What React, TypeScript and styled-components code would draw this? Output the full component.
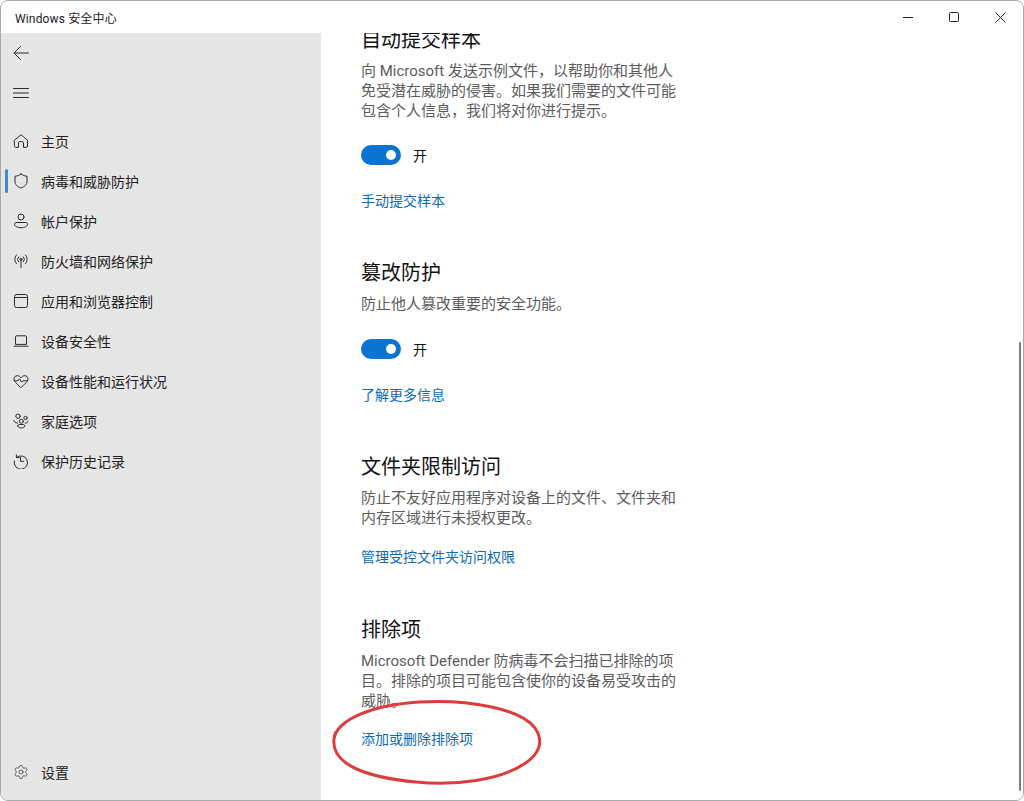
import React from "react";
import styled, { createGlobalStyle } from "styled-components";
import { Settings } from "lucide-react";

const Global = createGlobalStyle`
  html, body { margin: 0; padding: 0; background: #fff; }
  body { font-family: "Roboto", "Noto Sans CJK SC", sans-serif; }
  #root { width: 1024px; height: 801px; overflow: hidden; }
`;
const Win = styled.div`
  position: relative; box-sizing: border-box; width: 1024px; height: 801px;
  display: flex; flex-direction: column; overflow: hidden;
  background: #fff; border: 1px solid #a9a9a9;
  border-radius: 8px; color: #1a1a1a;
`;
const TitleBar = styled.header`
  flex: 0 0 32px; display: flex; align-items: center; justify-content: space-between;
  padding-left: 14px; background: #fff; font-size: 12px; color: #222;
`;
const TitleText = styled.span` font-weight: 400; letter-spacing: 0.15px; `;
const Controls = styled.div` display: flex; height: 32px; `;
const Ctl = styled.div`
  width: 46px; height: 32px; display: flex; align-items: center; justify-content: center;
  svg { display: block; }
`;
const Body = styled.div` flex: 1; display: flex; min-height: 0; `;
const Side = styled.aside`
  flex: 0 0 320px; display: flex; flex-direction: column;
  background: #e6e6e6; font-size: 14px; color: #222; padding-bottom: 8px; box-sizing: border-box;
`;
const ToolBtn = styled.div` height: 40px; display: flex; align-items: center; padding-left: 12px; `;
const Nav = styled.nav` margin-top: 8px; display: flex; flex-direction: column; `;
const Foot = styled.div` margin-top: auto; `;
const Row = styled.div<{ $active?: boolean }>`
  position: relative; height: 40px; display: flex; align-items: center; gap: 12px; padding-left: 12px;
  ${(p) => p.$active ? `&::before { content: ""; position: absolute; left: 4px; top: 8px; width: 3px; height: 24px; border-radius: 2px; background: #3f8cd0; }` : ""}
  svg { display: block; flex: none; }
`;
const Main = styled.main`
  flex: 1; min-width: 0; overflow: hidden; padding-left: 40px; background: #fff;
`;
const Section = styled.section<{ $top: number }>`
  width: 320px; margin-top: ${(p) => p.$top}px;
`;
const Heading = styled.h2`
  margin: 0; font-size: 20px; line-height: 28px; font-weight: 400; color: #111;
`;
const Desc = styled.p`
  margin: 7px 0 0; font-size: 15px; line-height: 20px; color: #5c5c5c; font-weight: 400;
`;
const ToggleRow = styled.div<{ $gap: number }>`
  margin-top: ${(p) => p.$gap}px; display: flex; align-items: center; gap: 12px; height: 20px; font-size: 14px; color: #111;
`;
const Track = styled.span`
  position: relative; display: block; width: 40px; height: 20px; border-radius: 10px; background: #0a74d0;
`;
const Knob = styled.span`
  position: absolute; right: 5px; top: 5px; width: 10px; height: 10px; border-radius: 50%; background: #fff;
`;
const Link = styled.a<{ $gap: number }>`
  display: block; margin-top: ${(p) => p.$gap}px; font-size: 14px; line-height: 20px; color: #0a6bb8; cursor: pointer;
`;
const ScrollThumb = styled.div`
  position: absolute; right: 2px; top: 341px; width: 2px; height: 449px; border-radius: 1px; background: #7a7a7a;
`;
const Scribble = styled.svg`
  position: absolute; left: 326px; top: 694px; pointer-events: none;
`;

const Ico: React.FC<{ children: React.ReactNode }> = ({ children }) => (
  <svg width={16} height={16} viewBox="0 0 16 16" fill="none" stroke="#2b2b2b" strokeWidth="1" strokeLinecap="round" strokeLinejoin="round">{children}</svg>
);

const items: { label: string; active?: boolean; icon: React.ReactNode }[] = [
  { label: "主页", icon: <Ico><path d="M1.5 7.2 8 1.7l6.5 5.5v5.8c0 .8-.7 1.4-1.4 1.4H10.5V9.8c0-.7-.5-1.2-1.2-1.2H6.7c-.7 0-1.2.5-1.2 1.2v4.6H2.9c-.8 0-1.4-.6-1.4-1.4z" /></Ico> },
  { label: "病毒和威胁防护", active: true, icon: <Ico><path d="M8 1c1.8 1.4 3.8 2.1 6 2.2v5c0 3.3-2.2 5.5-6 6.8-3.8-1.3-6-3.5-6-6.8v-5C4.2 3.1 6.2 2.4 8 1z" /></Ico> },
  { label: "帐户保护", icon: <Ico><circle cx="8" cy="4" r="3" /><path d="M3.2 9.5h9.6c.9 0 1.7.7 1.7 1.6 0 2.2-2.9 3.6-6.5 3.6s-6.5-1.4-6.5-3.6c0-.9.8-1.6 1.7-1.6z" /></Ico> },
  { label: "防火墙和网络保护", icon: <Ico><circle cx="8" cy="6.3" r="1.1" /><path d="M8 7.5V14.5M5.6 3.8a3.6 3.6 0 0 0 0 5M10.4 3.8a3.6 3.6 0 0 1 0 5M3.4 2a6.3 6.3 0 0 0 0 8.6M12.6 2a6.3 6.3 0 0 1 0 8.6" /></Ico> },
  { label: "应用和浏览器控制", icon: <Ico><rect x="1.5" y="1.5" width="13" height="13" rx="2" /><path d="M1.5 4.5h13" /></Ico> },
  { label: "设备安全性", icon: <Ico><path d="M2.5 11V4c0-.7.6-1.2 1.2-1.2h8.6c.7 0 1.2.5 1.2 1.2v7zM1 13.2h14" /></Ico> },
  { label: "设备性能和运行状况", icon: <Ico><path d="M2.5 9.3C1.5 8.2 1 7.2 1 6c0-2 1.5-3.3 3.3-3.3 1.5 0 2.8.8 3.7 2.1.9-1.3 2.2-2.1 3.7-2.1C13.5 2.7 15 4 15 6c0 1.2-.5 2.2-1.5 3.3L8 14.5z" /><path d="M1.5 7.8H5l1.5-2 2 3.4 1.3-1.4h4.7" /></Ico> },
  { label: "家庭选项", icon: <Ico><circle cx="5" cy="3.2" r="2.2" /><circle cx="12.5" cy="5" r="1.7" /><circle cx="8.3" cy="8.3" r="2" /><path d="M1 7.5c0 1.5 1.2 2.5 3.5 2.5M15 8.2c0 1-1 2-2.8 2M4.8 13c0-1 .6-1.5 1.5-1.5h4c.9 0 1.5.5 1.5 1.5 0 1-1.5 2-3.5 2s-3.5-1-3.5-2z" /></Ico> },
  { label: "保护历史记录", icon: <Ico><path d="M3.4 1.8v2.8h2.8" /><path d="M3.4 4.5A6.7 6.7 0 1 1 1.3 8" /><path d="M7.5 4.3V8.3h3.2" /></Ico> },
];

export default function App() {
  return (
    <>
      <Global />
      <Win>
        <TitleBar>
          <TitleText>Windows 安全中心</TitleText>
          <Controls>
            <Ctl><svg width="10" height="10" viewBox="0 0 10 10"><path d="M0 5.5h10" stroke="#222" /></svg></Ctl>
            <Ctl><svg width="10" height="10" viewBox="0 0 10 10" fill="none"><rect x=".5" y=".5" width="9" height="9" rx="1" stroke="#222" /></svg></Ctl>
            <Ctl><svg width="11" height="11" viewBox="0 0 11 11"><path d="M.5.5l10 10M10.500.5l-10 10" stroke="#222" /></svg></Ctl>
          </Controls>
        </TitleBar>
        <Body>
          <Side>
            <ToolBtn><Ico><path d="M15.5 8H1M7.5 1.500 1 8l6.500 6.500" /></Ico></ToolBtn>
            <ToolBtn><Ico><path d="M0.5 3.5h15M0.5 8h15M0.5 12.5h15" /></Ico></ToolBtn>
            <Nav>
              {items.map((it) => (
                <Row key={it.label} $active={it.active}>{it.icon}<span>{it.label}</span></Row>
              ))}
            </Nav>
            <Foot>
              <Row><Settings size={16} strokeWidth={1} color="#2b2b2b" /><span>设置</span></Row>
            </Foot>
          </Side>
          <Main>
            <Section $top={-7}>
              <Heading>自动提交样本</Heading>
              <Desc>向 Microsoft 发送示例文件，以帮助你和其他人免受潜在威胁的侵害。如果我们需要的文件可能包含个人信息，我们将对你进行提示。</Desc>
              <ToggleRow $gap={24}><Track><Knob /></Track><span>开</span></ToggleRow>
              <Link $gap={26}>手动提交样本</Link>
            </Section>
            <Section $top={48}>
              <Heading>篡改防护</Heading>
              <Desc>防止他人篡改重要的安全功能。</Desc>
              <ToggleRow $gap={25}><Track><Knob /></Track><span>开</span></ToggleRow>
              <Link $gap={26}>了解更多信息</Link>
            </Section>
            <Section $top={48}>
              <Heading>文件夹限制访问</Heading>
              <Desc>防止不友好应用程序对设备上的文件、文件夹和内存区域进行未授权更改。</Desc>
              <Link $gap={19}>管理受控文件夹访问权限</Link>
            </Section>
            <Section $top={49}>
              <Heading>排除项</Heading>
              <Desc>Microsoft Defender 防病毒不会扫描已排除的项目。排除的项目可能包含使你的设备易受攻击的威胁。</Desc>
              <Link $gap={18}>添加或删除排除项</Link>
            </Section>
          </Main>
        </Body>
        <ScrollThumb />
        <Scribble width="224" height="96" viewBox="0 0 224 96" fill="none">
          <path d="M7 44C10 24 46 10 92 7c50-3 102 7 116 26 9 13 5 26-11 36-24 16-68 22-108 18C46 83 4 72 7 44c0-3 1-5 2-7" stroke="#dd3c3c" strokeWidth="3" strokeLinecap="round" />
        </Scribble>
      </Win>
    </>
  );
}
